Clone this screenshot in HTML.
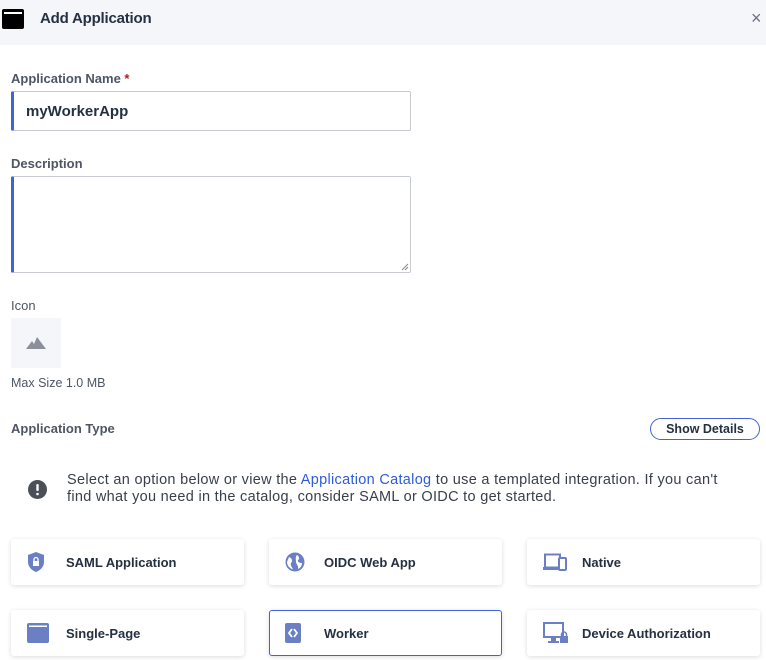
<!DOCTYPE html>
<html><head><style>
*{box-sizing:border-box;margin:0;padding:0}
body{width:766px;height:660px;overflow:hidden;background:#fff;font-family:"Liberation Sans",Arial,sans-serif;position:relative;color:#253041}
.abs{position:absolute}
.hdr{left:0;top:0;width:766px;height:45px;background:#f5f6fa}
.lbl{font-size:13px;color:#4e5664}
.inp{border:1px solid #c7cad1;border-left:3px solid #4462d8;border-radius:2px;background:#fff}
.card{background:#fff;border-radius:3px;box-shadow:0 1px 5px rgba(0,0,0,0.14);height:46px;width:233px;font-size:13px;font-weight:bold;color:#253041}
.card svg{position:absolute;left:16px;top:50%;transform:translateY(-50%)}
.card span{position:absolute;left:55px;top:16px}
</style></head><body>
<div class="abs hdr"></div>
<svg class="abs" style="left:2px;top:9px" width="22" height="20"><rect x="0" y="0" width="22" height="20" rx="2" fill="#000"/><rect x="2" y="3" width="18" height="2" fill="#fff"/></svg>
<div class="abs" style="left:40px;top:10px;font-size:15px;color:#253041;font-weight:bold;letter-spacing:-0.2px">Add Application</div>
<div class="abs" style="left:751px;top:9px;font-size:18px;color:#6b7280;line-height:18px">×</div>

<div class="abs lbl" style="left:11px;top:71px;font-weight:bold">Application Name <span style="color:#b01c1c">*</span></div>
<div class="abs inp" style="left:11px;top:91px;width:400px;height:40px"></div>
<div class="abs" style="left:26px;top:103px;font-size:15px;color:#253041;font-weight:bold">myWorkerApp</div>

<div class="abs lbl" style="left:11px;top:156px;font-weight:bold">Description</div>
<div class="abs inp" style="left:11px;top:176px;width:400px;height:97px"></div>
<svg class="abs" style="left:401px;top:263px" width="8" height="8"><path d="M1 7L7 1M4 7L7 4" stroke="#888" stroke-width="1"/></svg>

<div class="abs lbl" style="left:11px;top:298px">Icon</div>
<div class="abs" style="left:11px;top:318px;width:50px;height:50px;background:#f5f6fa"></div>
<svg class="abs" style="left:26px;top:336px" width="21" height="14"><path d="M0 13L6 5L8 8L11 1L20 13Z" fill="#8a8f99"/></svg>
<div class="abs lbl" style="left:11px;top:376px;font-size:12.5px">Max Size 1.0 MB</div>

<div class="abs lbl" style="left:11px;top:421px;font-weight:bold">Application Type</div>
<div class="abs" style="left:650px;top:418px;width:110px;height:22px;border:1px solid #4462d8;border-radius:11px;font-size:12.5px;text-align:center;line-height:20px;color:#253041;font-weight:bold">Show Details</div>

<svg class="abs" style="left:28px;top:480px" width="19" height="19"><circle cx="9.5" cy="9.5" r="9.5" fill="#4b4f58"/><rect x="8.3" y="4" width="2.4" height="7" rx="1" fill="#fff"/><circle cx="9.5" cy="14" r="1.3" fill="#fff"/></svg>
<div class="abs" style="left:67px;top:472px;font-size:14.5px;letter-spacing:0.3px;line-height:17px;color:#3a404a;width:700px;white-space:nowrap">Select an option below or view the <span style="color:#2f5bdb">Application Catalog</span> to use a templated integration. If you can't<br>find what you need in the catalog, consider SAML or OIDC to get started.</div>

<div class="abs card" style="left:11px;top:539px"><svg width="18" height="22"><path d="M9 1L17 4V11C17 16 13 19.5 9 21C5 19.5 1 16 1 11V4Z" fill="#6b80c4"/><rect x="6" y="10" width="6" height="5" fill="#fff"/><path d="M7 10V8.5A2 2 0 0 1 11 8.5V10" stroke="#fff" fill="none" stroke-width="1.3"/></svg><span>SAML Application</span></div>
<div class="abs card" style="left:269px;top:539px"><svg width="20" height="20"><circle cx="10" cy="10" r="9.5" fill="#6b80c4"/><path d="M4 5C7 6 8 9 6 11C5 13 7 15 8 17.5C4 16 2 13 2 10Z" fill="#fff"/><path d="M12 3C14 4 15 7 13 8C12 10 15 11 17 11C17 14 15 16 13 17C14 14 11 12 11 10C11 8 10 5 12 3Z" fill="#fff"/></svg><span>OIDC Web App</span></div>
<div class="abs card" style="left:527px;top:539px"><svg width="24" height="18"><rect x="2" y="1.5" width="15" height="13" fill="none" stroke="#6b80c4" stroke-width="2"/><rect x="0" y="14" width="17" height="3" fill="#6b80c4"/><rect x="16" y="5" width="7" height="12" rx="1" fill="#fff" stroke="#6b80c4" stroke-width="2"/></svg><span>Native</span></div>
<div class="abs card" style="left:11px;top:610px"><svg width="22" height="20"><rect x="0" y="0" width="22" height="20" rx="2" fill="#6b80c4"/><rect x="2" y="2.5" width="18" height="1.5" fill="#fff"/></svg><span>Single-Page</span></div>
<div class="abs card" style="left:269px;top:610px;border:1px solid #4462d8"><svg width="16" height="20" style="left:15px"><rect x="0" y="0" width="16" height="20" rx="2" fill="#6b80c4"/><path d="M7 6L4 10L7 14M9 6L12 10L9 14" stroke="#fff" stroke-width="1.8" fill="none"/></svg><span style="left:54px;top:15px">Worker</span></div>
<div class="abs card" style="left:527px;top:610px"><svg width="26" height="22"><rect x="1" y="1" width="19" height="14" fill="none" stroke="#6b80c4" stroke-width="2"/><rect x="8" y="15" width="5" height="4" fill="#6b80c4"/><rect x="5" y="19" width="11" height="2" fill="#6b80c4"/><rect x="17" y="14" width="8" height="7" fill="#6b80c4"/><path d="M18.5 14V12.5A2.5 2.5 0 0 1 23.5 12.5V14" stroke="#6b80c4" fill="none" stroke-width="1.5"/></svg><span>Device Authorization</span></div>
</body></html>
